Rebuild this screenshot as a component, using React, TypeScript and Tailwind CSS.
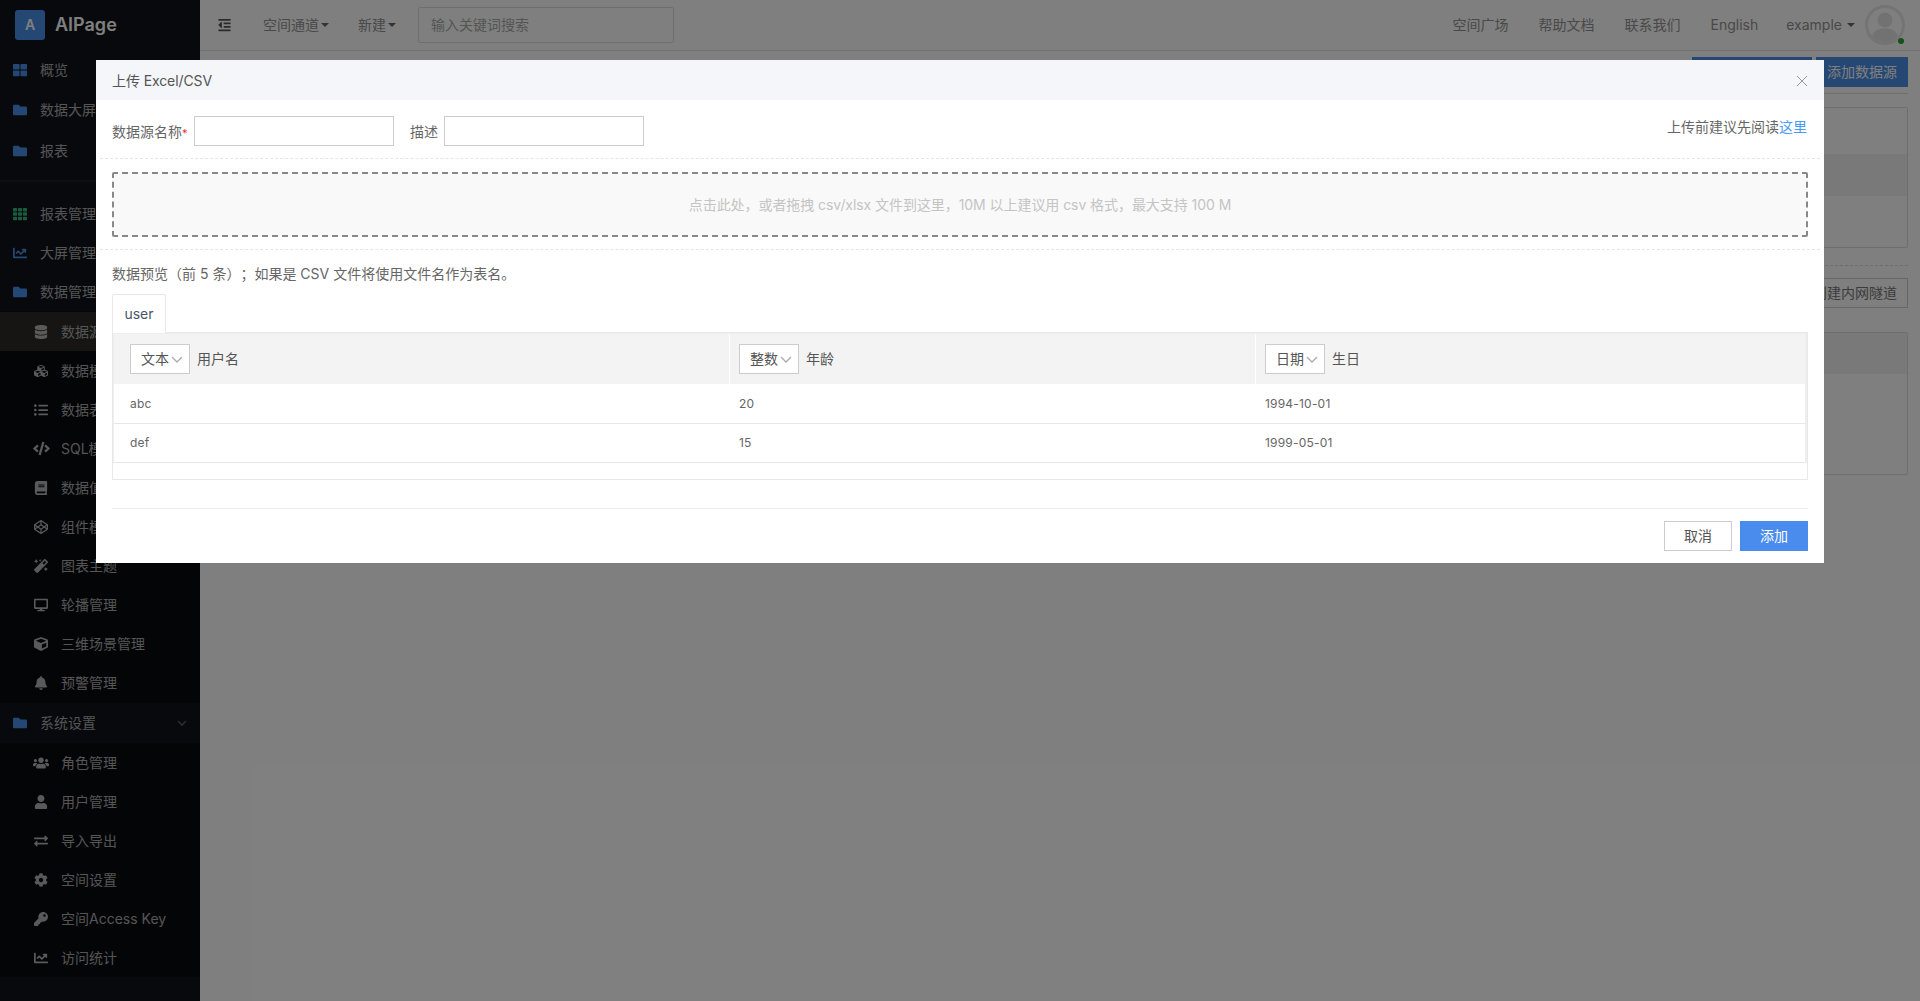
import type { ReactNode } from 'react'
import {
  FaBell, FaBook, FaChartLine, FaCode, FaCodepen, FaCog, FaCube, FaCubes, FaDatabase, FaDesktop,
  FaExchangeAlt, FaFolder, FaKey, FaListUl, FaMagic, FaOutdent, FaTh, FaThLarge, FaUser, FaUsers,
} from 'react-icons/fa'

const FONT = 'font-["Inter","Noto_Sans_CJK_SC",sans-serif] [text-spacing-trim:space-all]'

function Parent({ icon, label, h = 'h-[39px]', children }: { icon: ReactNode; label: string; h?: string; children?: ReactNode }) {
  return (
    <div className={`flex items-center pl-[13px] pr-[12px] text-sm text-[#aaaaaa] ${h}`}>
      <span className="flex w-[27px] shrink-0 [&>svg]:h-[14px] [&>svg]:w-auto">{icon}</span>
      <span className="whitespace-nowrap">{label}</span>
      {children}
    </div>
  )
}

function Sub({ icon, label, active }: { icon: ReactNode; label: string; active?: boolean }) {
  return (
    <div className={`flex h-[39px] items-center pl-[32px] text-sm text-[#aaaaaa] ${active ? 'bg-[#2c2a27]' : ''}`}>
      <span className="flex w-[29px] shrink-0 justify-center pr-[11px] text-[#b4b4b4] [&>svg]:h-[14px] [&>svg]:w-auto [&>svg]:shrink-0">{icon}</span>
      <span className="whitespace-nowrap">{label}</span>
    </div>
  )
}

function Sidebar() {
  const blue = 'text-[#4a8fe8]'
  return (
    <aside className="flex h-full w-[200px] shrink-0 flex-col overflow-hidden bg-[#0f1319]">
      <div className="flex h-[50px] shrink-0 items-center pl-[15px]">
        <div className="flex h-[30px] w-[30px] items-center justify-center rounded-[3px] bg-[#4a8fe8] text-sm font-semibold text-white">A</div>
        <span className="ml-[10px] text-lg font-semibold text-white">AIPage</span>
      </div>
      <div className="h-[132px] shrink-0 border-b-2 border-[#1c1f25]">
        <Parent h="h-[40px]" icon={<FaThLarge className={blue} />} label="概览" />
        <Parent h="h-[40px]" icon={<FaFolder className={blue} />} label="数据大屏" />
        <Parent h="h-[41px]" icon={<FaFolder className={blue} />} label="报表" />
      </div>
      <div className="h-[12px] shrink-0" />
      <Parent icon={<FaTh className="text-[#35b57f]" />} label="报表管理" />
      <Parent icon={<FaChartLine className={blue} />} label="大屏管理" />
      <Parent icon={<FaFolder className={blue} />} label="数据管理" />
      <div className="h-px shrink-0 bg-[#090b0f]" />
      <div className="shrink-0 bg-[#090b0f]">
        <Sub active icon={<FaDatabase />} label="数据源" />
        <Sub icon={<FaCubes />} label="数据模型" />
        <Sub icon={<FaListUl />} label="数据表格" />
        <Sub icon={<FaCode className="!h-[17px]" />} label="SQL模板" />
        <Sub icon={<FaBook />} label="数据值" />
        <Sub icon={<FaCodepen />} label="组件模板" />
        <Sub icon={<FaMagic />} label="图表主题" />
        <Sub icon={<FaDesktop />} label="轮播管理" />
        <Sub icon={<FaCube />} label="三维场景管理" />
        <Sub icon={<FaBell />} label="预警管理" />
      </div>
      <div className="h-px shrink-0 bg-[#090b0f]" />
      <Parent h="h-[40px]" icon={<FaFolder className={blue} />} label="系统设置">
        <svg className="ml-auto text-[#555a60]" width="12" height="12" viewBox="0 0 12 12" fill="none" stroke="currentColor" strokeWidth="1.6">
          <path d="M2 4l4 4 4-4" />
        </svg>
      </Parent>
      <div className="shrink-0 bg-[#090b0f]">
        <Sub icon={<FaUsers className="!h-[16px]" />} label="角色管理" />
        <Sub icon={<FaUser />} label="用户管理" />
        <Sub icon={<FaExchangeAlt />} label="导入导出" />
        <Sub icon={<FaCog />} label="空间设置" />
        <Sub icon={<FaKey />} label="空间Access Key" />
        <Sub icon={<FaChartLine />} label="访问统计" />
      </div>
    </aside>
  )
}

function Caret({ gap = 'ml-[2px]' }: { gap?: string }) {
  return <span className={`inline-block h-0 w-0 border-x-[4px] border-t-[4px] border-x-transparent border-t-[#666] ${gap}`} />
}

function TopBar() {
  return (
    <header className="flex h-[51px] shrink-0 items-center border-b border-[#e2e2e2] bg-white text-sm text-[#929292]">
      <FaOutdent className="ml-[18px] h-[14px] w-[13px] text-[#555]" />
      <div className="ml-[32px] flex items-center">空间通道<Caret /></div>
      <div className="ml-[29px] flex items-center">新建<Caret /></div>
      <div className="ml-[22px] flex h-[36px] w-[256px] items-center rounded-[2px] border border-[#dcdcdc] px-[12px] text-[#aaaaaa]">输入关键词搜索</div>
      <nav className="ml-auto flex items-center gap-[30px]">
        <span>空间广场</span>
        <span>帮助文档</span>
        <span>联系我们</span>
        <span>English</span>
      </nav>
      <div className="ml-[28px] flex items-center">example<Caret gap="ml-[5px]" /></div>
      <div className="relative mr-[15px] ml-[10px] h-[40px] w-[40px] rounded-full border-[3px] border-[#e8e8e8]">
        <svg viewBox="0 0 34 34" className="h-full w-full overflow-hidden rounded-full text-[#e4e4e4]" fill="currentColor">
          <circle cx="17" cy="12" r="7.5" />
          <path d="M4 29c1-6 6-8.5 13-8.5s12 2.5 13 8.5l-5 6H9z" />
        </svg>
        <span className="absolute top-[30px] left-[30px] h-[6px] w-[6px] rounded-full bg-[#33a033]" />
      </div>
    </header>
  )
}

function BackContent() {
  return (
    <div className="flex flex-1 flex-col px-[12px] pt-[6px] text-sm text-[#777]">
      <div className="flex h-[30px] justify-end gap-1">
        <div className="h-[30px] w-[120px] bg-[#4a8fe8]" />
        <div className="flex h-[30px] w-[92px] items-center justify-center bg-[#4a8fe8] text-white">添加数据源</div>
      </div>
      <div className="mt-[6px] border-t border-[#dddddd]" />
      <div className="mt-[13px] h-[141px] rounded-[2px] border border-[#dddddd]">
        <div className="h-[46px]" />
        <div className="h-[42px] bg-[#f3f3f3]" />
      </div>
      <div className="mt-[17px] border-t border-dashed border-[#dddddd]" />
      <div className="mt-[12px] flex justify-end">
        <div className="flex h-[30px] w-[106px] items-center justify-center border border-[#cccccc]">创建内网隧道</div>
      </div>
      <div className="mt-[24px] h-[143px] rounded-[2px] border border-[#dddddd]">
        <div className="h-[41px] bg-[#f3f3f3]" />
      </div>
    </div>
  )
}

function TypeSelect({ label }: { label: string }) {
  return (
    <div className="flex h-[30px] w-[60px] items-center border border-[#cccccc] bg-white pl-[10px] text-sm text-[#555]">
      <span>{label}</span>
      <svg className="ml-[2px] text-[#aaa]" width="12" height="12" viewBox="0 0 12 12" fill="none" stroke="currentColor" strokeWidth="1.3">
        <path d="M1 4l5 5 5-5" />
      </svg>
    </div>
  )
}

const COLS = [
  { type: '文本', name: '用户名' },
  { type: '整数', name: '年龄' },
  { type: '日期', name: '生日' },
]
const ROWS = [
  ['abc', '20', '1994-10-01'],
  ['def', '15', '1999-05-01'],
]

function UploadModal() {
  return (
    <div className="absolute top-[60px] left-[96px] w-[1728px] bg-white text-sm text-[#666]">
      <div className="flex h-[40px] items-center justify-between bg-[#f4f6fa] pt-[1px] pr-[16px] pl-[16px] text-[#555]">
        <span className="tracking-[-0.1px]">上传 Excel/CSV</span>
        <svg className="text-[#999]" width="12" height="12" viewBox="0 0 12 12" fill="none" stroke="currentColor" strokeWidth="1">
          <path d="M1 1l10 10M11 1L1 11" />
        </svg>
      </div>
      <div className="mx-[4px] flex h-[59px] items-start border-b border-dashed border-[#e6e6e6] pt-[16px] pr-[13px] pl-[12px]">
        <span className="mt-[6px] w-[82px] whitespace-nowrap">数据源名称<span className="text-[11px] text-[#e33]">*</span></span>
        <input className="h-[30px] w-[200px] border border-[#cccccc] bg-white" />
        <span className="mt-[6px] ml-[16px] w-[34px]">描述</span>
        <input className="h-[30px] w-[200px] border border-[#cccccc] bg-white" />
        <span className="mt-[1px] ml-auto">上传前建议先阅读<span className="text-[#4a9bf5]">这里</span></span>
      </div>
      <div className="mx-[16px] mt-[13px] flex h-[65px] items-center justify-center rounded-[2px] border-2 border-dashed border-[#888888] bg-[#f9f9f9] tracking-[-0.06px] text-[#c4c4c4]">
        点击此处，或者拖拽 csv/xlsx 文件到这里，10M 以上建议用 csv 格式，最大支持 100 M
      </div>
      <div className="mx-[4px] mt-[12px] border-b border-dashed border-[#e6e6e6]" />
      <div className="mx-[16px] mt-[13px] leading-[21px]">数据预览（前 5 条）；如果是 CSV 文件将使用文件名作为表名。</div>
      <div className="mx-[16px] mt-[10px] flex h-[39px]">
        <div className="z-10 flex h-[39px] w-[54px] items-center justify-center rounded-t-[2px] border border-b-0 border-[#e8e8e8] bg-white text-[#4a5568]">user</div>
      </div>
      <div className="mx-[16px] -mt-px h-[148px] border border-[#e8e8e8]">
        <div className="h-[130px] border-t border-r-2 border-l border-[#eeeeee]">
          <div className="grid h-[50px] grid-cols-[615px_526px_1fr] bg-[#f3f3f3]">
            {COLS.map((c, i) => (
              <div key={c.name} className={`flex items-center gap-[7px] ${i === 0 ? 'pl-[16px]' : 'border-l border-white pl-[9px]'}`}>
                <TypeSelect label={c.type} />
                <span className="text-[#555]">{c.name}</span>
              </div>
            ))}
          </div>
          {ROWS.map((r, i) => (
            <div key={r[0]} className={`grid grid-cols-[615px_526px_1fr] items-center border-b border-[#e8e8e8] text-xs tracking-[0.2px] text-[#666] ${i === 0 ? 'h-[40px]' : 'h-[39px]'}`}>
              <span className="pl-[16px]">{r[0]}</span>
              <span className="pl-[10px]">{r[1]}</span>
              <span className="pl-[10px]">{r[2]}</span>
            </div>
          ))}
        </div>
      </div>
      <div className="mx-[16px] mt-[28px] flex justify-end gap-2 border-t border-[#ebedf3] pt-[12px] pb-[12px]">
        <button className="h-[30px] w-[68px] border border-[#cccccc] bg-white text-[#555]">取消</button>
        <button className="h-[30px] w-[68px] bg-[#4a8bee] text-white">添加</button>
      </div>
    </div>
  )
}

export default function App() {
  return (
    <div className={`relative flex h-screen w-full overflow-hidden bg-white ${FONT}`}>
      <Sidebar />
      <main className="flex min-w-0 flex-1 flex-col">
        <TopBar />
        <BackContent />
      </main>
      <div className="absolute inset-0 bg-black/50" />
      <UploadModal />
    </div>
  )
}
